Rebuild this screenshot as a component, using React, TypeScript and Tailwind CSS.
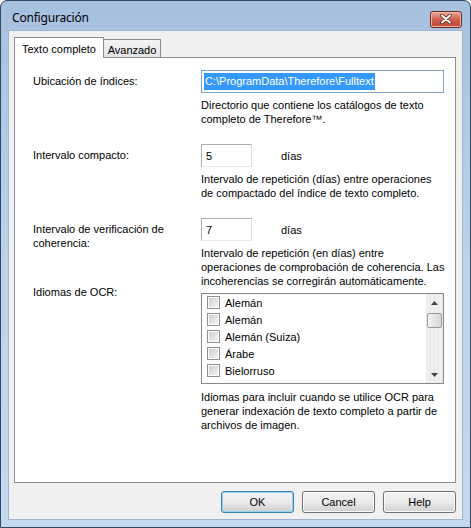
import React from 'react';

const body = "font-['Liberation_Sans',Arial,sans-serif] text-[11px] text-black";

const languages = ['Alemán', 'Alemán', 'Alemán (Suiza)', 'Árabe', 'Bielorruso'];

function Checkbox() {
	return (
		<span className="flex h-[13px] w-[13px] shrink-0 items-center justify-center border border-[#8e8f8f] bg-white">
			<span className="h-[9px] w-[9px] bg-gradient-to-br from-[#cbcfd5] to-[#f4f4f4]" />
		</span>
	);
}

function Button({ label, active }: { label: string; active?: boolean }) {
	return (
		<button
			className={
				active
					? 'h-[22px] w-[73px] rounded-[3px] border border-[#3c7fb1] bg-gradient-to-b from-[#f2f2f2] via-[#ebebeb] to-[#cfcfcf] shadow-[inset_0_0_0_1px_#8fd5f5] text-[11px]'
					: 'h-[22px] w-[73px] rounded-[3px] border border-[#707070] bg-gradient-to-b from-[#f2f2f2] via-[#ebebeb] to-[#cfcfcf] shadow-[inset_0_0_0_1px_#fcfcfc] text-[11px]'
			}
		>
			{label}
		</button>
	);
}

export default function App() {
	return (
		<div className={`h-[528px] w-[471px] bg-white ${body}`}>
			<div className="flex h-full flex-col rounded-t-[7px] border border-[#34465c] bg-gradient-to-b from-[#a6c0df] via-[#bdd3ec] to-[#c3d8ef]">
				{/* title bar */}
				<div className="flex h-[29px] items-center justify-between pl-[11px] pr-[8px]">
					<span className="pt-[4px] font-['Noto_Sans',sans-serif] text-[12px] tracking-[-0.2px]">Configuración</span>
					<button className="mt-[7px] flex h-[17px] w-[32px] items-center justify-center rounded-[3px] border border-[#6b2b22] bg-gradient-to-b from-[#e8a99b] via-[#d0614f] to-[#c0462f] shadow-[inset_0_0_0_1px_#f0b6a8]">
						<svg width="12" height="10" viewBox="0 0 12 10">
							<path d="M2 1.5 L10 8.5 M10 1.5 L2 8.5" stroke="#5a2a24" strokeWidth="3.6" strokeLinecap="round" />
							<path d="M2 1.5 L10 8.5 M10 1.5 L2 8.5" stroke="#ffffff" strokeWidth="2" strokeLinecap="round" />
						</svg>
					</button>
				</div>

				{/* client area */}
				<div className="mx-[7px] mb-[7px] flex flex-1 flex-col border border-[#9fb4cf] bg-[#f0f0f0]">
					<div className="ml-[5px] mt-[6px] flex h-[20px] items-end">
						<div className="relative z-10 -mb-px flex h-[21px] w-[90px] items-start justify-center border border-b-0 border-[#898c95] bg-white pt-[3px]">
							Texto completo
						</div>
						<div className="flex h-[18px] w-[57px] items-start justify-center border border-b-0 border-l-0 border-[#898c95] bg-gradient-to-b from-[#f3f3f3] to-[#e3e3e3] pt-[2px]">
							Avanzado
						</div>
					</div>

					{/* tab panel */}
					<div className="ml-[5px] h-[426px] w-[442px] border border-[#898c95] bg-white pl-[18px] pt-[12px]">
						<div className="grid grid-cols-[168px_1fr] leading-[14px]">
							<div className="pt-[4px]">Ubicación de índices:</div>
							<div>
								<div className="flex h-[23px] w-[243px] items-center border border-[#7da2ce] pl-[2px]">
									<span className="bg-[#3399ff] px-[1px] leading-[17px] text-white">C:\ProgramData\Therefore\Fulltext</span>
								</div>
								<p className="mt-[5px]">
									Directorio que contiene los catálogos de texto
									<br />
									completo de Therefore™.
								</p>
							</div>

							<div className="mt-[18px] pt-[4px]">Intervalo compacto:</div>
							<div className="mt-[18px]">
								<div className="flex items-center">
									<div className="flex h-[23px] w-[51px] items-center border border-[#abadb3] border-b-[#e3e9ef] border-r-[#dbdfe6] pl-[4px]">5</div>
									<span className="ml-[29px]">días</span>
								</div>
								<p className="mt-[5px]">
									Intervalo de repetición (días) entre operaciones
									<br />
									de compactado del índice de texto completo.
								</p>
							</div>

							<div className="mt-[18px] pt-[4px]">
								Intervalo de verificación de
								<br />
								coherencia:
							</div>
							<div className="mt-[18px]">
								<div className="flex items-center">
									<div className="flex h-[23px] w-[51px] items-center border border-[#abadb3] border-b-[#e3e9ef] border-r-[#dbdfe6] pl-[4px]">7</div>
									<span className="ml-[29px]">días</span>
								</div>
								<p className="mt-[5px]">
									Intervalo de repetición (en días) entre
									<br />
									operaciones de comprobación de coherencia. Las
									<br />
									incoherencias se corregirán automáticamente.
								</p>
							</div>

							<div className="-mt-[3px]">Idiomas de OCR:</div>
							<div className="mt-[5px]">
								<div className="flex h-[91px] w-[243px] border border-[#828790]">
									<ul className="flex-1 pl-[5px]">
										{languages.map((l, i) => (
											<li key={i} className="flex h-[17px] items-center gap-[5px]">
												<Checkbox />
												<span>{l}</span>
											</li>
										))}
									</ul>
									<div className="flex w-[17px] flex-col items-center bg-[repeating-linear-gradient(90deg,#e6e6e6_0px,#f2f2f2_2px,#ebebeb_4px)]">
										<div className="flex h-[17px] items-center justify-center">
											<svg width="7" height="4" viewBox="0 0 7 4"><path d="M3.5 0 L7 4 L0 4 Z" fill="#444" /></svg>
										</div>
										<div className="mt-[2px] h-[15px] w-[15px] rounded-[2px] border border-[#9a9a9a] bg-gradient-to-r from-[#f3f3f3] via-[#e5e5e5] to-[#d6d6d6]" />
										<div className="flex-1" />
										<div className="flex h-[17px] items-center justify-center">
											<svg width="7" height="4" viewBox="0 0 7 4"><path d="M0 0 L7 0 L3.5 4 Z" fill="#444" /></svg>
										</div>
									</div>
								</div>
								<p className="mt-[6px]">
									Idiomas para incluir cuando se utilice OCR para
									<br />
									generar indexación de texto completo a partir de
									<br />
									archivos de imagen.
								</p>
							</div>
						</div>
					</div>

					<div className="mr-[6px] mt-[8px] flex justify-end gap-[8px]">
						<Button label="OK" active />
						<Button label="Cancel" />
						<Button label="Help" />
					</div>
				</div>
			</div>
		</div>
	);
}
